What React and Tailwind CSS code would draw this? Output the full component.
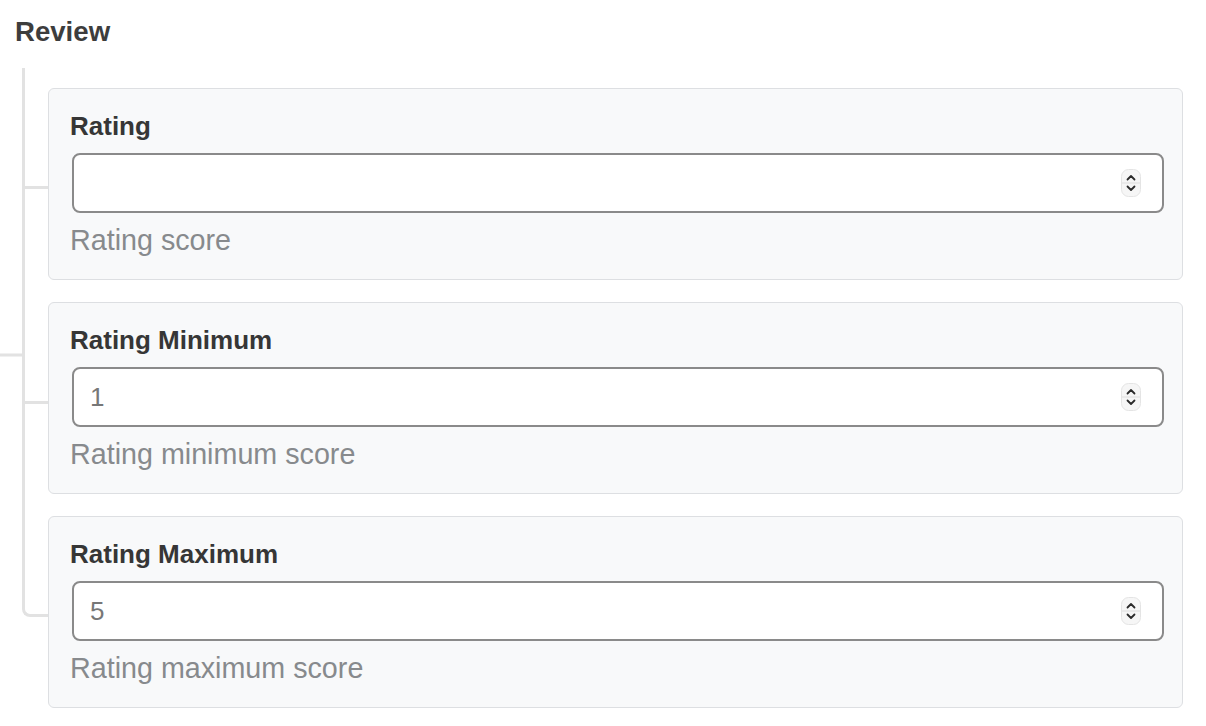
import React from "react";

const fields = [
  { label: "Rating", value: "", help: "Rating score" },
  { label: "Rating Minimum", value: "1", help: "Rating minimum score" },
  { label: "Rating Maximum", value: "5", help: "Rating maximum score" },
];

// native-looking number stepper
function Stepper() {
  return (
    <svg width="20" height="28" viewBox="0 0 20 28" fill="none">
      <rect x="0.5" y="0.5" width="19" height="27" rx="7" fill="#f6f6f6" stroke="#e4e4e4" />
      <line x1="1" y1="14" x2="19" y2="14" stroke="#dedede" />
      <path d="M6.5 10.5L10 7L13.5 10.5" stroke="#2b2b2b" strokeWidth="1.8" strokeLinecap="round" strokeLinejoin="round" />
      <path d="M6.5 17.5L10 21L13.5 17.5" stroke="#2b2b2b" strokeWidth="1.8" strokeLinecap="round" strokeLinejoin="round" />
    </svg>
  );
}

function FieldCard({ field }) {
  return (
    <div className="h-[192px] rounded-[6px] border border-[#dddfe2] bg-[#f8f9fa] pl-[21px] pr-[18px] pt-[22px]">
      <div className="text-[26px] leading-[30px] font-bold text-[#363636]">{field.label}</div>
      <div className="mt-[12px] ml-[2px] h-[60px] flex items-center justify-between rounded-[8px] border-2 border-[#8a8a8a] bg-white pl-[16px] pr-[21px]">
        <span className="text-[26px] text-[#777]">{field.value}</span>
        <Stepper />
      </div>
      <div className="mt-[10px] text-[28.7px] leading-[34px] text-[#878a8d]">{field.help}</div>
    </div>
  );
}

export default function App() {
  return (
    <div
      className="w-[1206px] h-[726px] bg-white overflow-hidden"
      style={{ fontFamily: '"Liberation Sans", Helvetica, Arial, sans-serif' }}
    >
      <div className="relative pr-[23px] pb-[2px]">
        {/* parent branch */}
        <div className="absolute left-0 top-1/2 -translate-y-1/2 w-[22px] h-[3px] bg-[#e2e2e2]" />
        <div className="pt-[16px] pl-[15px] text-[27.6px] leading-[32px] font-bold text-[#3d3d3d]">
          Review
        </div>
        <div className="ml-[22px] mt-[20px] flex flex-col">
          {fields.map((f, i) => {
            const first = i === 0;
            const last = i === fields.length - 1;
            return (
              <div key={f.label} className="flex">
                <div className="w-[26px] shrink-0 flex flex-col">
                  {last ? (
                    <div className="h-[123px] border-l-[3px] border-b-[3px] border-[#e2e2e2] rounded-bl-[8px]" />
                  ) : (
                    <>
                      <div className={first ? "h-[118px] border-l-[3px] border-[#e2e2e2]" : "h-[121px] border-l-[3px] border-[#e2e2e2]"} />
                      <div className="h-[3px] bg-[#e2e2e2]" />
                      <div className="flex-1 border-l-[3px] border-[#e2e2e2]" />
                    </>
                  )}
                </div>
                <div className={first ? "flex-1 pt-[20px]" : "flex-1 pt-[22px]"}>
                  <FieldCard field={f} />
                </div>
              </div>
            );
          })}
        </div>
      </div>
    </div>
  );
}
